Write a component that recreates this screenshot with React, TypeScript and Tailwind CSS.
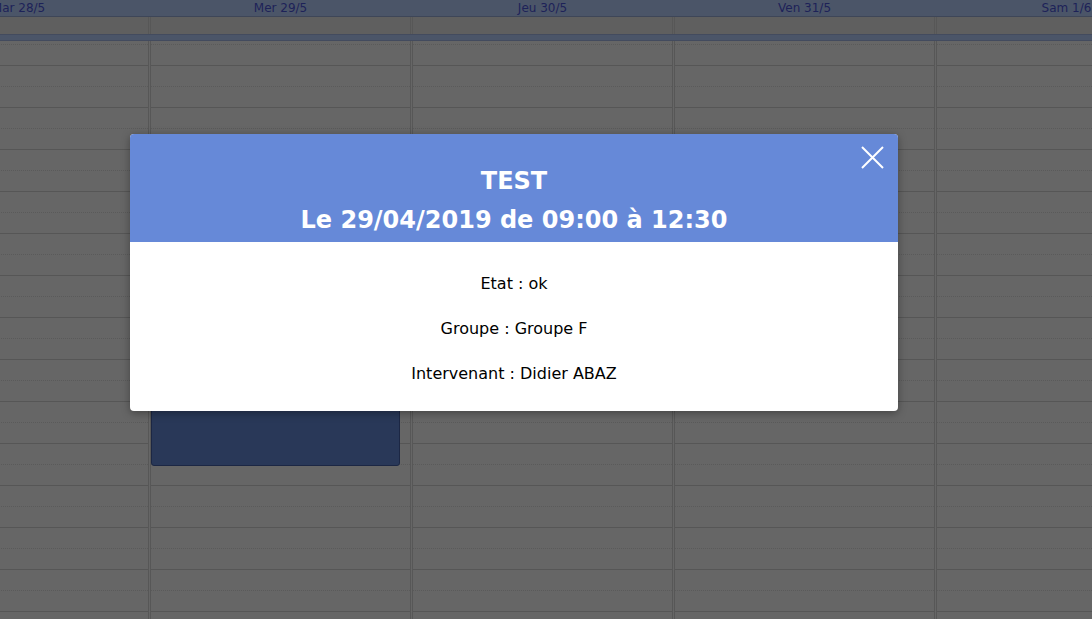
const days = ["Mar 28/5", "Mer 29/5", "Jeu 30/5", "Ven 31/5", "Sam 1/6"];
const rows = Array.from({ length: 28 }, (_, i) => i);

const Column = ({ index }: { index: number }) => {
  return (
    <div className="relative w-[261px] shrink-0 border-x border-[#575757]">
      <div className="h-[4px] border-b border-dotted border-[#5a5a5a]" />
      {rows.map((r) => (
        <div
          key={r}
          className={
            r % 2 === 0
              ? "h-[21px] border-b border-[#565656]"
              : "h-[21px] border-b border-dotted border-[#5a5a5a]"
          }
        />
      ))}
      {index === 1 && (
        <div className="absolute left-0 top-[160px] h-[265px] w-[249px] rounded-[3px] border border-[#1c2744] bg-[#293858]" />
      )}
    </div>
  );
};

export default function App() {
  return (
    <div
      className="relative h-[619px] w-[1092px] overflow-hidden bg-[#666666]"
      style={{ fontFamily: '"DejaVu Sans", sans-serif' }}
    >
      {/* day header */}
      <div className="h-[17px] border-b border-[#3e4658] bg-[#4b5568]">
        <div className="ml-[-112px] flex gap-px">
          {days.map((d) => (
            <div
              key={d}
              className="w-[261px] shrink-0 text-center text-[12px] leading-[16px] text-[#1d2258]"
            >
              {d}
            </div>
          ))}
        </div>
      </div>

      {/* all-day row */}
      <div className="ml-[-112px] flex h-[17px] gap-px bg-[#5f5f5f]">
        {days.map((d) => (
          <div key={d} className="w-[261px] shrink-0 border-x border-[#575757]" />
        ))}
      </div>

      {/* separator */}
      <div className="h-[7px] border-y border-[#434b5e] bg-[#4b5568]" />

      {/* time grid */}
      <div className="ml-[-112px] flex gap-px">
        {days.map((d, i) => (
          <Column key={d} index={i} />
        ))}
      </div>

      {/* modal */}
      <div className="absolute left-[130px] top-[134px] w-[768px] overflow-hidden rounded-[4px] bg-white shadow-[0_2px_8px_rgba(0,0,0,0.35)]">
        <div className="relative h-[108px] bg-[#6689d8] pt-[28px] text-center text-[24px] font-bold leading-[39px] text-white">
          <div>TEST</div>
          <div>Le 29/04/2019 de 09:00 à 12:30</div>
          <button className="absolute right-[14px] top-[12px] h-[23px] w-[23px]">
            <svg viewBox="0 0 23 23" className="h-[23px] w-[23px]">
              <path d="M1 1 L22 22 M22 1 L1 22" stroke="white" strokeWidth="2" fill="none" />
            </svg>
          </button>
        </div>
        <div className="flex flex-col gap-[21px] pb-[25px] pt-[30px] text-center text-[16px] leading-6 text-black">
          <p>Etat : ok</p>
          <p>Groupe : Groupe F</p>
          <p>Intervenant : Didier ABAZ</p>
        </div>
      </div>
    </div>
  );
}
